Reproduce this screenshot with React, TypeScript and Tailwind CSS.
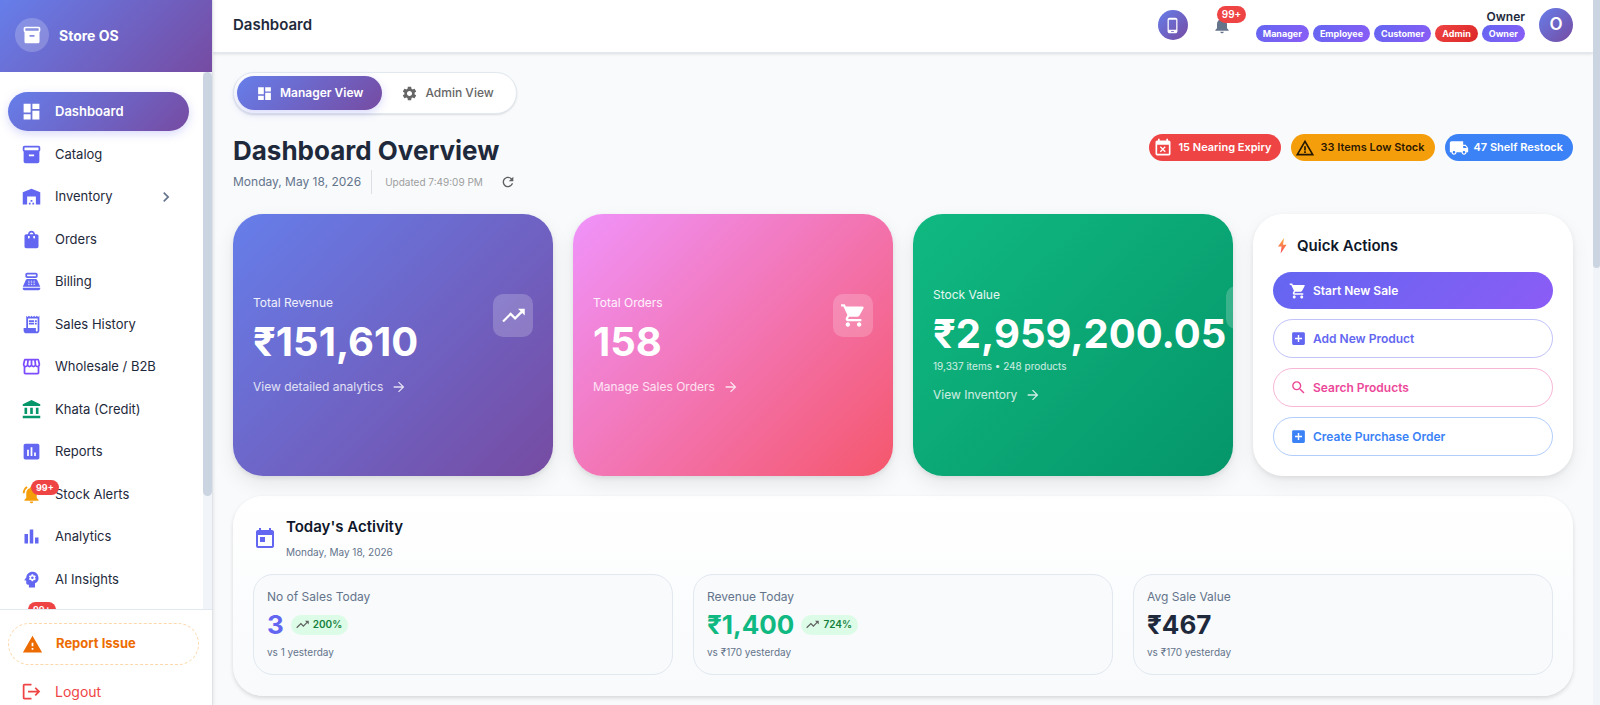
import type { ReactNode } from 'react';
import type { IconType } from 'react-icons';
import {
  MdAccountBalance,
  MdAddBox,
  MdArrowForward,
  MdAssessment,
  MdBarChart,
  MdChevronRight,
  MdDashboard,
  MdEventBusy,
  MdInventory2,
  MdLocalShipping,
  MdLogout,
  MdNotifications,
  MdNotificationsActive,
  MdPhoneAndroid,
  MdPointOfSale,
  MdPsychology,
  MdReceiptLong,
  MdRefresh,
  MdSearch,
  MdSettings,
  MdShoppingBag,
  MdShoppingCart,
  MdOutlineStorefront,
  MdToday,
  MdTrendingUp,
  MdWarehouse,
  MdWarning,
  MdWarningAmber,
} from 'react-icons/md';

type NavItem = { label: string; icon: IconType; color: string; badge?: string; expandable?: boolean };

const navItems: NavItem[] = [
  { label: 'Catalog', icon: MdInventory2, color: 'text-[#6366f1]' },
  { label: 'Inventory', icon: MdWarehouse, color: 'text-[#6366f1]', expandable: true },
  { label: 'Orders', icon: MdShoppingBag, color: 'text-[#6366f1]' },
  { label: 'Billing', icon: MdPointOfSale, color: 'text-[#6366f1]' },
  { label: 'Sales History', icon: MdReceiptLong, color: 'text-[#6366f1]' },
  { label: 'Wholesale / B2B', icon: MdOutlineStorefront, color: 'text-[#7c4dff]' },
  { label: 'Khata (Credit)', icon: MdAccountBalance, color: 'text-[#059669]' },
  { label: 'Reports', icon: MdAssessment, color: 'text-[#6366f1]' },
  { label: 'Stock Alerts', icon: MdNotificationsActive, color: 'text-[#f59e0b]', badge: '99+' },
  { label: 'Analytics', icon: MdBarChart, color: 'text-[#6366f1]' },
  { label: 'AI Insights', icon: MdPsychology, color: 'text-[#6366f1]' },
];

function Sidebar() {
  return (
    <aside className="z-10 flex w-[213px] shrink-0 flex-col border-r border-[#dfe3e8] bg-white shadow-[1px_0_3px_rgba(0,0,0,0.08)]">
      <div className="flex h-[72px] shrink-0 items-center gap-[10px] bg-[linear-gradient(135deg,#667eea_0%,#764ba2_100%)] px-[15px] pb-[2px]">
        <span className="flex size-[34px] items-center justify-center rounded-full bg-white/20 text-white">
          <MdInventory2 size={20} />
        </span>
        <span className="text-[14px] font-bold text-white">Store OS</span>
      </div>

      <div className="flex min-h-0 flex-1">
        <nav className="min-w-0 flex-1 overflow-hidden pt-5 pr-[14px] pl-2">
          <ul className="flex flex-col gap-1 text-[13px] leading-normal">
            <li>
              <a
                href="#dashboard"
                className="flex items-center gap-[13px] rounded-full bg-[linear-gradient(135deg,#667eea_0%,#764ba2_100%)] px-[13px] pt-[10px] pb-[9px] font-semibold text-white shadow-[0_3px_10px_rgba(99,102,241,0.25)]"
              >
                <span className="flex h-4 items-center">
                  <MdDashboard size={21} />
                </span>
                Dashboard
              </a>
            </li>
            {navItems.map(({ label, icon: Icon, color, badge, expandable }) => (
              <li key={label}>
                <a href="#section" className="flex items-center gap-[13px] px-[13px] pt-[10px] pb-[9px] text-[#1e293b]">
                  <span className={`relative flex h-4 items-center ${color}`}>
                    <Icon size={21} />
                    {badge && <Badge className="top-[-6px] left-[10px]">{badge}</Badge>}
                  </span>
                  <span className="flex-1">{label}</span>
                  {expandable && <MdChevronRight size={20} className="-my-1 text-[#64748b]" />}
                </a>
              </li>
            ))}
            <li>
              <a href="#alerts" aria-label="Alerts" className="flex px-[13px] py-[10px]">
                <span className="relative flex h-4 items-center text-[#6366f1]">
                  <MdNotifications size={21} />
                  <Badge className="top-[-10px] left-[7px]">99+</Badge>
                </span>
              </a>
            </li>
          </ul>
        </nav>
        <div aria-hidden="true" className="w-[9px] shrink-0 bg-[#f1f5f9]">
          <div className="h-[79%] rounded-full bg-[#cbd5e1]" />
        </div>
      </div>

      <div className="h-24 shrink-0 border-t border-[#e2e8f0] px-2 pt-[13px]">
        <button
          type="button"
          className="flex h-[42px] w-[191px] items-center gap-[13px] rounded-full border border-dashed border-[#fed7aa] px-[13px] text-[13px] font-bold text-[#ed6c02]"
        >
          <MdWarning size={21} />
          Report Issue
        </button>
        <button type="button" className="flex h-[52px] items-center gap-[13px] px-[13px] text-[14px] text-[#ef4444]">
          <MdLogout size={21} />
          Logout
        </button>
      </div>
    </aside>
  );
}

function Badge({ className, children }: { className: string; children: ReactNode }) {
  return (
    <span
      className={`absolute flex h-[15px] items-center rounded-full bg-[#ef4444] px-[5px] text-[9px] font-bold text-white ${className}`}
    >
      {children}
    </span>
  );
}

const roles = ['Manager', 'Employee', 'Customer', 'Admin', 'Owner'];

function Header() {
  return (
    <header className="flex h-[53px] shrink-0 items-center border-b border-[#e2e8f0] bg-white px-5 pb-[2px] shadow-[0_1px_3px_rgba(0,0,0,0.12)]">
      <span className="flex-1 text-[15px] font-semibold text-[#1e293b]">Dashboard</span>
      <button
        type="button"
        aria-label="Mobile app"
        className="mr-6 flex size-[30px] items-center justify-center rounded-full bg-[linear-gradient(135deg,#667eea_0%,#764ba2_100%)] text-white"
      >
        <MdPhoneAndroid size={17} />
      </button>
      <button type="button" aria-label="Notifications" className="relative mr-6 text-[#64748b]">
        <MdNotifications size={20} />
        <span className="absolute -top-[9px] left-[5px] flex h-[17px] items-center rounded-full bg-[#ef4444] px-[5px] text-[10px] font-semibold text-white">
          99+
        </span>
      </button>
      <div className="flex flex-col items-end">
        <span className="text-[12px] leading-[17px] font-semibold text-[#1e293b]">Owner</span>
        <div className="flex gap-1">
          {roles.map((role) => (
            <span
              key={role}
              className={`flex h-[17px] items-center rounded-full px-[7px] text-[9px] font-bold text-white ${
                role === 'Admin'
                  ? 'bg-[linear-gradient(135deg,#ef4444_0%,#dc2626_100%)]'
                  : 'bg-[linear-gradient(135deg,#6366f1_0%,#8b5cf6_100%)]'
              }`}
            >
              {role}
            </span>
          ))}
        </div>
      </div>
      <button
        type="button"
        aria-label="Account"
        className="ml-[14px] flex size-[34px] items-center justify-center rounded-full bg-[linear-gradient(135deg,#667eea_0%,#764ba2_100%)] text-[17px] font-semibold text-white"
      >
        O
      </button>
    </header>
  );
}

function StatusChip({ icon: Icon, color, children }: { icon: IconType; color: string; children: ReactNode }) {
  return (
    <button type="button" className={`flex h-[27px] items-center gap-[5px] rounded-full pr-[10px] pl-1 text-[11px] font-semibold ${color}`}>
      <Icon size={20} />
      {children}
    </button>
  );
}

type StatCardProps = { label: string; value: string; caption?: string; link: string; icon: IconType; gradient: string };

function StatCard({ label, value, caption, link, icon: Icon, gradient }: StatCardProps) {
  return (
    <section
      className={`flex min-w-0 items-center overflow-hidden rounded-[30px] px-5 text-white shadow-[0_8px_20px_rgba(0,0,0,0.08),0_2px_5px_rgba(0,0,0,0.08)] ${gradient}`}
    >
      <div className="flex min-w-full justify-between">
        <div className="whitespace-nowrap">
          <p className="text-[12px] leading-[18px] text-white/90">{label}</p>
          <p className="mt-[5px] text-[40px] leading-[49px] font-bold">{value}</p>
          {caption && <p className="text-[10px] leading-4 text-white/80">{caption}</p>}
          <a href="#details" className="mt-3 flex items-center gap-2 text-[12px] leading-[18px] text-white/80">
            {link}
            <MdArrowForward size={16} />
          </a>
        </div>
        <span className="flex h-[43px] w-10 shrink-0 items-center justify-center rounded-[10px] bg-white/20">
          <Icon size={27} />
        </span>
      </div>
    </section>
  );
}

function OutlineAction({ icon: Icon, color, children }: { icon: IconType; color: string; children: ReactNode }) {
  return (
    <button type="button" className={`flex h-[39px] items-center gap-[6px] rounded-full border px-4 text-[12px] font-semibold ${color}`}>
      <Icon size={17} />
      {children}
    </button>
  );
}

function QuickActions() {
  return (
    <section className="rounded-[30px] bg-white p-5 shadow-[0_8px_20px_rgba(0,0,0,0.06),0_2px_5px_rgba(0,0,0,0.08)]">
      <h2 className="flex h-[24px] items-center gap-[6px] text-[15px] font-semibold text-[#0f172a]">
        <svg viewBox="0 0 18 18" className="size-[18px]" aria-hidden="true">
          <defs>
            <linearGradient id="bolt" x1="0" y1="0" x2="0" y2="1">
              <stop offset="0" stopColor="#ffb340" />
              <stop offset="1" stopColor="#f4435a" />
            </linearGradient>
          </defs>
          <path d="M11 1 5 9.6h3.6L7.6 16.6 13.6 7.7H10z" fill="url(#bolt)" />
        </svg>
        Quick Actions
      </h2>
      <div className="mt-[14px] flex flex-col gap-[10px]">
        <button
          type="button"
          className="flex h-[37px] items-center gap-[6px] rounded-full bg-[linear-gradient(135deg,#6366f1_0%,#8b5cf6_100%)] px-4 text-[12px] font-semibold text-white"
        >
          <MdShoppingCart size={18} />
          Start New Sale
        </button>
        <OutlineAction icon={MdAddBox} color="border-[#6366f1]/40 text-[#6366f1]">Add New Product</OutlineAction>
        <OutlineAction icon={MdSearch} color="border-[#ec4899]/40 text-[#ec4899]">Search Products</OutlineAction>
        <OutlineAction icon={MdAddBox} color="border-[#3b82f6]/40 text-[#3b82f6]">Create Purchase Order</OutlineAction>
      </div>
    </section>
  );
}

const metrics = [
  { label: 'No of Sales Today', value: '3', color: 'text-[#6366f1]', trend: '200%', note: 'vs 1 yesterday' },
  { label: 'Revenue Today', value: '₹1,400', color: 'text-[#10b981]', trend: '724%', note: 'vs ₹170 yesterday' },
  { label: 'Avg Sale Value', value: '₹467', color: 'text-[#1e293b]', note: 'vs ₹170 yesterday' },
];

function TodayActivity() {
  return (
    <section className="mt-5 rounded-[30px] bg-[linear-gradient(180deg,#ffffff_0%,#f8fafc_100%)] px-5 pt-[19px] pb-[21px] shadow-[0_2px_4px_rgba(0,0,0,0.14)]">
      <div className="flex items-center gap-[9px]">
        <MdToday size={24} className="text-[#6366f1]" />
        <div>
          <h2 className="text-[15px] leading-6 font-semibold text-[#0f172a]">Today's Activity</h2>
          <p className="mt-[3px] text-[10px] leading-5 text-[#64748b]">Monday, May 18, 2026</p>
        </div>
      </div>
      <div className="mt-3 grid grid-cols-3 gap-5">
        {metrics.map((metric) => (
          <div key={metric.label} className="h-[101px] rounded-[20px] border border-[#e2e8f0] bg-[#f8fafc] px-[13px] pt-[13px]">
            <p className="text-[12px] leading-[18px] text-[#64748b]">{metric.label}</p>
            <div className="flex h-[37px] items-center gap-[7px]">
              <span className={`text-[26px] font-bold ${metric.color}`}>{metric.value}</span>
              {metric.trend && (
                <span className="flex h-5 items-center gap-[3px] rounded-full bg-[#dcfce7] pr-[6px] pl-1 text-[10px] font-semibold text-[#15803d]">
                  <MdTrendingUp size={15} className="text-[#616161]" />
                  {metric.trend}
                </span>
              )}
            </div>
            <p className="mt-px text-[10px] leading-4 text-[#64748b]">{metric.note}</p>
          </div>
        ))}
      </div>
    </section>
  );
}

export default function App() {
  return (
    <div className="flex h-screen overflow-hidden bg-[#f8fafc] font-['Inter',sans-serif]">
      <Sidebar />
      <div className="flex min-w-0 flex-1 flex-col">
        <Header />
        <main className="min-h-0 flex-1 overflow-hidden px-5 pt-[19px]">
          <div className="flex w-fit rounded-full border border-[#e2e8f0] bg-white p-[3px] text-[12px] shadow-[0_1px_2px_rgba(0,0,0,0.12)]">
            <button
              type="button"
              className="flex h-[34px] items-center gap-[7px] rounded-full bg-[linear-gradient(135deg,#667eea_0%,#764ba2_100%)] px-[19px] font-semibold text-white shadow-[0_3px_8px_rgba(99,102,241,0.25)]"
            >
              <MdDashboard size={17} />
              Manager View
            </button>
            <button type="button" className="flex h-[34px] items-center gap-[7px] rounded-full px-[19px] font-medium text-[#666666]">
              <MdSettings size={17} />
              Admin View
            </button>
          </div>

          <div className="mt-5 flex items-start justify-between">
            <div>
              <h1 className="text-[26px] leading-[33px] font-bold text-[#1e293b]">Dashboard Overview</h1>
              <div className="mt-[3px] flex h-6 items-center">
                <span className="text-[12px] text-[#64748b]">Monday, May 18, 2026</span>
                <span className="mr-[13px] ml-[10px] h-full w-px bg-[#dcdfe3]" />
                <span className="text-[10px] text-[#9e9e9e]">Updated 7:49:09 PM</span>
                <button type="button" aria-label="Refresh" className="ml-[17px] text-[#616161]">
                  <MdRefresh size={16} />
                </button>
              </div>
            </div>
            <div className="flex gap-[10px]">
              <StatusChip icon={MdEventBusy} color="bg-[#ef4444] text-white">15 Nearing Expiry</StatusChip>
              <StatusChip icon={MdWarningAmber} color="bg-[#f59e0b] text-black/85">33 Items Low Stock</StatusChip>
              <StatusChip icon={MdLocalShipping} color="bg-[#3b82f6] text-white">47 Shelf Restock</StatusChip>
            </div>
          </div>

          <div className="mt-5 grid grid-cols-4 gap-5">
            <StatCard
              label="Total Revenue"
              value="₹151,610"
              link="View detailed analytics"
              icon={MdTrendingUp}
              gradient="bg-[linear-gradient(135deg,#667eea_0%,#764ba2_100%)]"
            />
            <StatCard
              label="Total Orders"
              value="158"
              link="Manage Sales Orders"
              icon={MdShoppingCart}
              gradient="bg-[linear-gradient(135deg,#f093fb_0%,#f5576c_100%)]"
            />
            <StatCard
              label="Stock Value"
              value="₹2,959,200.05"
              caption="19,337 items • 248 products"
              link="View Inventory"
              icon={MdInventory2}
              gradient="bg-[linear-gradient(135deg,#10b981_0%,#059669_100%)]"
            />
            <QuickActions />
          </div>

          <TodayActivity />
        </main>
      </div>
      <div aria-hidden="true" className="w-[7px] shrink-0 bg-[#f1f5f9]">
        <div className="h-[38%] rounded-b-full bg-[#cbd5e1]" />
      </div>
    </div>
  );
}
